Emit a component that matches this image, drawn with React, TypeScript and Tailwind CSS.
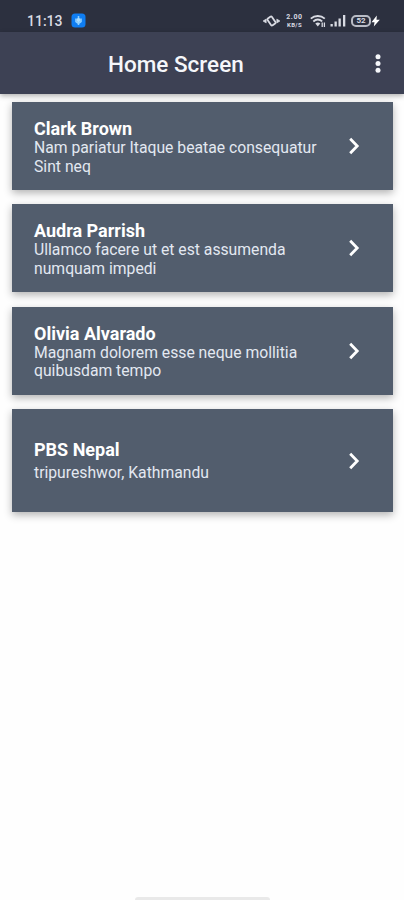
import React from 'react';

interface Place {
  id: number;
  name: string;
  lines: string[];
  tall?: boolean;
}

const places: Place[] = [
  { id: 1, name: 'Clark Brown', lines: ['Nam pariatur Itaque beatae consequatur', 'Sint neq'] },
  { id: 2, name: 'Audra Parrish', lines: ['Ullamco facere ut et est assumenda', 'numquam impedi'] },
  { id: 3, name: 'Olivia Alvarado', lines: ['Magnam dolorem esse neque mollitia', 'quibusdam tempo'] },
  { id: 4, name: 'PBS Nepal', lines: ['tripureshwor, Kathmandu'], tall: true },
];

const StatusBar: React.FC = () => (
  <div className="flex h-8 shrink-0 items-center bg-[#2c303f] pt-[9px] pr-[24px] pl-[27px] text-[#d9dbe3]">
    <span className="w-[36px] text-[14px] leading-4 font-medium whitespace-nowrap">11:13</span>
    <svg className="ml-[8px] h-[15px] w-[15px]" viewBox="0 0 15 15">
      <rect x="0.5" y="0.5" width="14" height="14" rx="3.5" fill="#0f7df2" />
      <path d="M7.5 3v9M5 5.5v3l2.5 2 2.5-2v-3" stroke="#8fd0ff" strokeWidth="1.6" fill="none" />
      <circle cx="7.5" cy="7" r="2" fill="#a9dcff" />
    </svg>

    <div className="ml-auto flex items-center">
      {/* Vibrate */}
      <svg className="h-[14px] w-[19px]" viewBox="0 0 19 14" fill="none" stroke="currentColor">
        <rect x="6.8" y="2.8" width="5.4" height="8.4" rx="1.2" transform="rotate(-35 9.5 7)" strokeWidth="1.8" />
        <path d="M4.2 5 1 7l3.200 2zM14.800 5 18 7l-3.200 2z" fill="currentColor" strokeWidth="0.6" />
      </svg>
      {/* Network speed */}
      <div className="ml-[4px] flex w-[19px] flex-col items-center font-bold">
        <span className="text-[7px] leading-[8px] tracking-[0.6px]">2.00</span>
        <span className="text-[6px] leading-[7px] tracking-[0.3px]">KB/S</span>
      </div>
      {/* Wifi */}
      <svg className="ml-[6px] h-[14px] w-[17px]" viewBox="0 0 17 14" fill="none" stroke="currentColor">
        <path d="M0.8 4.6c4-3.4 10-3.4 14 0M3.3 7.4c2.8-2.3 6.2-2.3 8.9 0" strokeWidth="1.9" />
        <path d="M5.3 9.4c1.6-1.2 3.5-1.2 5 0L7.8 12.5z" fill="currentColor" stroke="none" />
        <path d="M12.2 8.5v4.5M14.4 8.5v4.5" strokeWidth="1.3" />
      </svg>
      {/* Signal */}
      <svg className="ml-[3px] h-[13px] w-[16px]" viewBox="0 0 16 13" fill="currentColor">
        <rect x="0.5" y="10" width="2.3" height="2.5" />
        <rect x="4.5" y="7.5" width="2.3" height="5" />
        <rect x="8.5" y="4.5" width="2.3" height="8" />
        <rect x="13" y="1" width="2.3" height="11.5" />
      </svg>
      {/* Battery */}
      <div className="ml-[5px] flex h-[12px] w-[20px] items-center justify-center rounded-[5px] border-2 border-[#b9bcc6] text-[8px] leading-none font-bold">
        52
      </div>
      <svg className="h-[12px] w-[9px]" viewBox="0 0 9 12" fill="white">
        <path d="M5.8 0.5 0.5 7.2h3L2.8 11.5 8.8 4.8H5.5z" />
      </svg>
    </div>
  </div>
);

const AppBar: React.FC = () => (
  <header className="relative z-10 flex h-[62px] shrink-0 items-center bg-[#3d4154] pr-[14px] pl-[108px] shadow-[0_2px_5px_rgba(0,0,0,0.3)]">
    <h1 className="flex-1 pt-[2px] text-[22.5px] leading-7 font-medium whitespace-nowrap text-[#f5f6fa]">
      Home Screen
    </h1>
    <button aria-label="More options" className="flex h-6 w-6 items-center justify-center">
      <svg className="h-6 w-6" viewBox="0 0 24 24" fill="#f5f6fa">
        <circle cx="12" cy="5.8" r="2.5" />
        <circle cx="12" cy="12.5" r="2.5" />
        <circle cx="12" cy="19.2" r="2.5" />
      </svg>
    </button>
  </header>
);

const PlaceCard: React.FC<{ place: Place }> = ({ place }) => (
  <div
    className={`flex items-center bg-[#525d6d] pr-[27px] pl-[22px] shadow-[0_3px_8px_rgba(0,0,0,0.3)] ${
      place.tall ? 'h-[103px]' : 'h-[88px]'
    }`}
  >
    <div className={`flex flex-1 flex-col ${place.tall ? 'gap-[4px] pt-[1px]' : 'pt-[3px]'}`}>
      <h2 className="text-[18px] leading-5 font-bold whitespace-nowrap text-white">{place.name}</h2>
      <p className="text-[15.72px] leading-[18.4px] whitespace-nowrap text-[#e3e8f1]">
        {place.lines.map((line) => (
          <span key={line} className="block">
            {line}
          </span>
        ))}
      </p>
    </div>
    <svg className="h-6 w-6 shrink-0" viewBox="0 0 24 24" fill="none" stroke="white" strokeWidth="2.8">
      <path d="M8.2 4.8 15.2 12l-7 7.2" />
    </svg>
  </div>
);

export default function App() {
  return (
    <div className="flex h-[900px] w-[404px] flex-col overflow-hidden bg-[#fefefe] font-['Roboto',sans-serif]">
      <StatusBar />
      <AppBar />
      <main className="flex flex-1 flex-col gap-[14.4px] pt-[8px] pr-[11px] pl-[12px]">
        {places.map((place) => (
          <PlaceCard key={place.id} place={place} />
        ))}
      </main>
      {/* Gesture handle */}
      <div className="mx-auto h-[3px] w-[135px] rounded-t-full bg-[#e9e9e9]" />
    </div>
  );
}
